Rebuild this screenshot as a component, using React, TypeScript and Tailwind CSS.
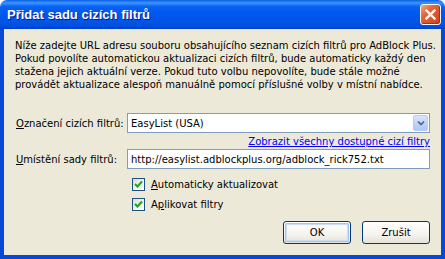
// ─── Add filter subscription dialog (XP look) ───────────────────

const ui = "font-['DejaVu_Sans',Verdana,sans-serif] text-[10px] leading-[13px] text-black";

function CloseButton() {
  return (
    <div className="flex h-[21px] w-[21px] items-center justify-center rounded-[3px] border border-white bg-[linear-gradient(135deg,#F4A888_0%,#E4643E_35%,#D0401C_100%)] shadow-[inset_-1px_-1px_0_#B02E10]">
      <svg width="11" height="11" viewBox="0 0 11 11">
        <path d="M1.5 1.5 L9.5 9.5 M9.5 1.5 L1.5 9.5" stroke="#fff" strokeWidth="2.4" strokeLinecap="square" />
      </svg>
    </div>
  );
}

function Check({ label, akey }: { label: string; akey: number }) {
  return (
    <div className="flex items-center gap-[6px]">
      <div className="flex h-[13px] w-[13px] items-center justify-center border border-[#1C5180] bg-[linear-gradient(135deg,#DCDBD5_0%,#F4F4F0_60%,#FFFFFF_100%)]">
        <svg width="9" height="9" viewBox="0 0 9 9">
          <path d="M1 4 L3.5 6.5 L8 1.5" fill="none" stroke="#21A121" strokeWidth="2" />
        </svg>
      </div>
      <span>
        {label.slice(0, akey)}
        <span className="underline">{label[akey]}</span>
        {label.slice(akey + 1)}
      </span>
    </div>
  );
}

function XpButton({ children, isDefault }: { children: string; isDefault?: boolean }) {
  return (
    <div className="h-[23px] w-[68px] rounded-[3px] border border-[#003C74] bg-[linear-gradient(to_bottom,#FFFFFF_0%,#F4F3EE_60%,#E3E1D8_100%)] p-[1px]">
      <div
        className={
          'flex h-full w-full items-center justify-center rounded-[2px] ' +
          (isDefault ? 'shadow-[inset_0_0_0_1px_#A9C4F1,inset_0_0_0_2px_#CCDCF8]' : '')
        }
      >
        {children}
      </div>
    </div>
  );
}

export default function App() {
  return (
    <div className={`${ui} flex h-[259px] w-[445px] flex-col bg-white`}>
      {/* ─── Title bar ─────────────────────────────────── */}
      <div className="flex h-[29px] items-center justify-between rounded-t-[7px] bg-[linear-gradient(to_bottom,#0A60E8_0%,#3D95FF_10%,#0A63F2_22%,#0058EE_45%,#0055E8_75%,#004FDD_90%,#003FC8_100%)] pl-[7px] pr-[4px]">
        <span className="font-['Liberation_Sans',Arial,sans-serif] text-[13px] font-bold text-white [text-shadow:1px_1px_0_#0A1C8C]">
          Přidat sadu cizích filtrů
        </span>
        <CloseButton />
      </div>

      {/* ─── Body ──────────────────────────────────────── */}
      <div className="flex flex-1 flex-col border-x-[4px] border-b-[4px] border-[#0648D8] bg-[#ECE9D8] px-[11px] pt-[10px]">
        <p className="whitespace-nowrap">
          Níže zadejte URL adresu souboru obsahujícího seznam cizích filtrů pro AdBlock Plus.
          <br />
          Pokud povolíte automatickou aktualizaci cizích filtrů, bude automaticky každý den
          <br />
          stažena jejich aktuální verze. Pokud tuto volbu nepovolíte, bude stále možné
          <br />
          provádět aktualizace alespoň manuálně pomocí příslušné volby v místní nabídce.
        </p>

        <div className="mt-[22px] flex items-center">
          <span className="w-[112px] pl-[1px]">
            <span className="underline">O</span>značení cizích filtrů:
          </span>
          <div className="flex h-[20px] flex-1 items-center justify-between border border-[#7F9DB9] bg-white pl-[3px] pr-[1px]">
            <span>EasyList (USA)</span>
            <div className="flex h-[16px] w-[15px] items-center justify-center rounded-[2px] border border-[#B9CBF3] bg-[linear-gradient(to_bottom,#D9E5FD_0%,#C1D3FB_50%,#B0C6F6_100%)]">
              <svg width="8" height="6" viewBox="0 0 8 6">
                <path d="M1 1.5 L4 4.5 L7 1.5" fill="none" stroke="#4D6185" strokeWidth="1.6" />
              </svg>
            </div>
          </div>
        </div>

        <div className="mt-[2px] flex justify-end">
          <span className="text-[#0000FF] underline">Zobrazit všechny dostupné cizí filtry</span>
        </div>

        <div className="mt-[1px] flex items-center">
          <span className="w-[112px] pl-[1px]">
            <span className="underline">U</span>místění sady filtrů:
          </span>
          <div className="flex h-[20px] flex-1 items-center border border-[#7F9DB9] bg-white pl-[3px]">
            http://easylist.adblockplus.org/adblock_rick752.txt
          </div>
        </div>

        <div className="mt-[9px] flex flex-col gap-[7px] pl-[117px]">
          <Check label="Automaticky aktualizovat" akey={0} />
          <Check label="Aplikovat filtry" akey={1} />
        </div>

        <div className="mt-[10px] flex justify-end gap-[11px]">
          <XpButton isDefault>OK</XpButton>
          <XpButton>Zrušit</XpButton>
        </div>
      </div>
    </div>
  );
}
